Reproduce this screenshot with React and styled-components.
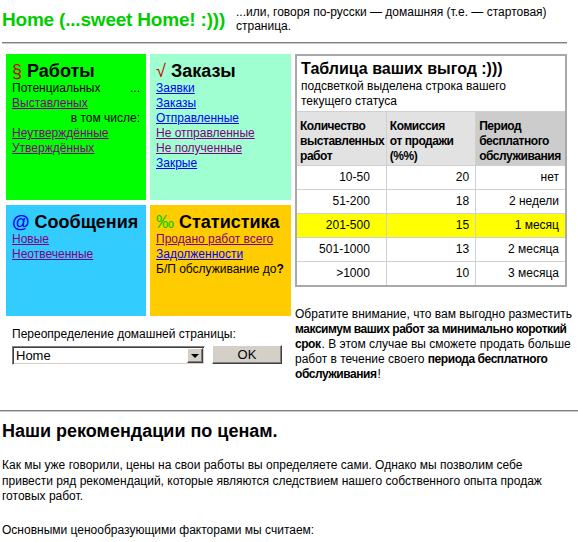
import React from 'react';
import styled, { createGlobalStyle } from 'styled-components';

const GlobalStyle = createGlobalStyle`
  html, body {
    margin: 0;
    padding: 0;
    background: #fff;
  }
  body {
    font-family: "Liberation Sans", Arial, sans-serif;
    font-size: 12px;
    color: #000;
  }
`;

const Page = styled.div`
  width: 578px;
`;

const Header = styled.div`
  display: flex;
  width: 565px;
  margin-left: 2px;
  padding-top: 5px;
`;

const SiteTitle = styled.h1`
  margin: 4px 0 0;
  width: 234px;
  font-size: 19px;
  line-height: 22px;
  font-weight: bold;
  letter-spacing: -0.2px;
  color: #00cc00;
`;

const Tagline = styled.div`
  flex: 1;
  font-size: 12px;
  line-height: 14px;
`;

const Rule = styled.hr`
  box-sizing: border-box;
  height: 0;
  border: 0;
  border-top: 1px solid #808080;
  border-bottom: 1px solid #c8c8c8;
  margin: ${p => p.$margin};
  width: ${p => p.$width};
`;

const Main = styled.div`
  display: flex;
  align-items: flex-start;
  gap: 4px;
  padding-left: 6px;
`;

const LeftCol = styled.div`
  width: 285px;
`;

const Tiles = styled.div`
  display: grid;
  grid-template-columns: 140px 141px;
  grid-template-rows: 146px 111px;
  gap: 5px 4px;
`;

const Tile = styled.div`
  box-sizing: border-box;
  padding: 7px 6px;
  background: ${p => p.$bg};
`;

const TileTitle = styled.div`
  font-size: 18px;
  line-height: 20px;
  font-weight: bold;
  white-space: nowrap;
`;

const Sign = styled.span`
  color: ${p => p.$color};
  font-weight: ${p => (p.$bold ? 'bold' : 'normal')};
`;

const Line = styled.div`
  display: ${p => (p.$split ? 'flex' : 'block')};
  justify-content: space-between;
  text-align: ${p => (p.$right ? 'right' : 'left')};
  line-height: 15px;
  font-size: 12px;
  white-space: nowrap;
`;

const Link = styled.a`
  color: ${p => (p.$visited ? '#800080' : '#0000ff')};
  text-decoration: underline;
`;

const Strong = styled.b`
  font-weight: bold;
  letter-spacing: -0.45px;
  padding-right: 1px;
`;

const HomeForm = styled.form`
  margin: 11px 0 0;
  padding-left: 6px;
`;

const FormLabel = styled.div`
  line-height: 15px;
  font-size: 12px;
`;

const Controls = styled.div`
  display: flex;
  align-items: flex-start;
  gap: 7px;
  margin-top: 3px;
`;

const SelectWrap = styled.div`
  position: relative;
  box-sizing: border-box;
  width: 193px;
  height: 19px;
  margin-top: 1px;
  border-top: 1px solid #808080;
  border-left: 1px solid #808080;
  border-right: 1px solid #fff;
  border-bottom: 1px solid #fff;
  box-shadow: inset 1px 1px 0 #404040, inset -1px -1px 0 #d4d0c8;
  background: #fff;
`;

const Select = styled.select`
  appearance: none;
  -webkit-appearance: none;
  box-sizing: border-box;
  width: 100%;
  height: 100%;
  border: 0;
  outline: 0;
  background: transparent;
  padding: 0 0 0 3px;
  font-family: "Liberation Sans", Arial, sans-serif;
  font-size: 13px;
  color: #000;
`;

const DropButton = styled.span`
  position: absolute;
  top: 1px;
  right: 1px;
  box-sizing: border-box;
  width: 16px;
  height: 15px;
  display: flex;
  align-items: center;
  justify-content: center;
  background: #d4d0c8;
  border-top: 1px solid #fff;
  border-left: 1px solid #fff;
  border-right: 1px solid #404040;
  border-bottom: 1px solid #404040;
  box-shadow: inset -1px -1px 0 #808080;
  pointer-events: none;
`;

const Arrow = styled.span`
  width: 0;
  height: 0;
  border-left: 4px solid transparent;
  border-right: 4px solid transparent;
  border-top: 4px solid #000;
`;

const OkButton = styled.button`
  box-sizing: border-box;
  width: 70px;
  height: 19px;
  padding: 0;
  background: #d4d0c8;
  border-top: 1px solid #fff;
  border-left: 1px solid #fff;
  border-right: 1px solid #404040;
  border-bottom: 1px solid #404040;
  box-shadow: inset -1px -1px 0 #808080;
  font-family: "Liberation Sans", Arial, sans-serif;
  font-size: 13px;
  color: #000;
`;

const RightCol = styled.div`
  width: 281px;
`;

const TableFrame = styled.div`
  box-sizing: border-box;
  width: 272px;
  border: 2px solid #a8a8a8;
`;

const Table = styled.table`
  width: 100%;
  border-collapse: collapse;
  table-layout: fixed;
`;

const TitleCell = styled.td`
  padding: 3px 4px 2px;
  border-bottom: 1px solid #d0d0d0;
  background: #fff;
`;

const TableTitle = styled.div`
  font-size: 16px;
  line-height: 20px;
  font-weight: bold;
`;

const TableSub = styled.div`
  width: 215px;
  font-size: 12px;
  line-height: 15px;
`;

const HeadCell = styled.th`
  width: ${p => p.$w}px;
  padding: 7px 2px 1px 3px;
  vertical-align: top;
  text-align: left;
  font-size: 12px;
  line-height: 15px;
  font-weight: bold;
  letter-spacing: -0.45px;
  white-space: nowrap;
  background: ${p => (p.$dark ? '#cccccc' : '#e2e2e2')};
  border: 1px solid #d0d0d0;
  border-top: 0;
  &:first-child { border-left: 0; }
  &:last-child { border-right: 0; }
`;

const Row = styled.tr`
  background: ${p => (p.$current ? '#ffff00' : '#fff')};
`;

const Cell = styled.td`
  padding: 4px ${p => (p.$wide ? 16 : 6)}px 4px 4px;
  text-align: right;
  font-size: 12px;
  line-height: 15px;
  border: 1px solid #d0d0d0;
  &:first-child { border-left: 0; }
  &:last-child { border-right: 0; }
  tr:last-child > & { border-bottom: 0; }
`;

const Note = styled.p`
  margin: 20px 0 0;
  font-size: 12px;
  line-height: 15px;
`;

const SectionTitle = styled.h2`
  margin: 8px 0 0 2px;
  font-size: 18px;
  line-height: 22px;
  font-weight: bold;
`;

const Para = styled.p`
  margin: ${p => p.$top}px 0 0 2px;
  width: 545px;
  font-size: 12px;
  line-height: 15.5px;
`;

const rates = [
  { count: '10-50', fee: '20', period: 'нет' },
  { count: '51-200', fee: '18', period: '2 недели' },
  { count: '201-500', fee: '15', period: '1 месяц', current: true },
  { count: '501-1000', fee: '13', period: '2 месяца' },
  { count: '>1000', fee: '10', period: '3 месяца' },
];

const App = () => {
  return (
    <Page>
      <GlobalStyle />
      <Header>
        <SiteTitle>Home (...sweet Home! :)))</SiteTitle>
        <Tagline>...или, говоря по-русски — домашняя (т.е. — стартовая) страница.</Tagline>
      </Header>
      <Rule $margin="9px 0 10px 2px" $width="565px" />

      <Main>
        <LeftCol>
          <Tiles>
            <Tile $bg="#00ff00">
              <TileTitle>
                <Sign $color="#cc0000">§</Sign> Работы
              </TileTitle>
              <Line $split>
                <span>Потенциальных</span>
                <span>...</span>
              </Line>
              <Line><Link href="#" $visited>Выставленых</Link></Line>
              <Line $right>в том числе:</Line>
              <Line><Link href="#" $visited>Неутверждённые</Link></Line>
              <Line><Link href="#" $visited>Утверждённых</Link></Line>
            </Tile>
            <Tile $bg="#a0ffd0">
              <TileTitle>
                <Sign $color="#cc0000">√</Sign> Заказы
              </TileTitle>
              <Line><Link href="#">Заявки</Link></Line>
              <Line><Link href="#">Заказы</Link></Line>
              <Line><Link href="#">Отправленные</Link></Line>
              <Line><Link href="#" $visited>Не отправленные</Link></Line>
              <Line><Link href="#" $visited>Не полученные</Link></Line>
              <Line><Link href="#">Закрые</Link></Line>
            </Tile>
            <Tile $bg="#33ccff">
              <TileTitle>
                <Sign $color="#0000ff" $bold>@</Sign> Сообщения
              </TileTitle>
              <Line><Link href="#" $visited>Новые</Link></Line>
              <Line><Link href="#" $visited>Неотвеченные</Link></Line>
            </Tile>
            <Tile $bg="#ffcc00">
              <TileTitle>
                <Sign $color="#00cc00">‰</Sign> Статистика
              </TileTitle>
              <Line><Link href="#" $visited>Продано работ всего</Link></Line>
              <Line><Link href="#">Задолженности</Link></Line>
              <Line>Б/П обслуживание до<b>?</b></Line>
            </Tile>
          </Tiles>

          <HomeForm onSubmit={e => e.preventDefault()}>
            <FormLabel>Переопределение домашней страницы:</FormLabel>
            <Controls>
              <SelectWrap>
                <Select defaultValue="home">
                  <option value="home">Home</option>
                </Select>
                <DropButton><Arrow /></DropButton>
              </SelectWrap>
              <OkButton type="submit">OK</OkButton>
            </Controls>
          </HomeForm>
        </LeftCol>

        <RightCol>
          <TableFrame>
            <Table>
              <tbody>
                <tr>
                  <TitleCell colSpan={3}>
                    <TableTitle>Таблица ваших выгод :)))</TableTitle>
                    <TableSub>подсветкой выделена строка вашего текущего статуса</TableSub>
                  </TitleCell>
                </tr>
                <tr>
                  <HeadCell $w={97}>Количество<br />выставленных<br />работ</HeadCell>
                  <HeadCell $w={77}>Комиссия<br />от продажи<br />(%%)</HeadCell>
                  <HeadCell $w={94} $dark>Период<br />бесплатного<br />обслуживания</HeadCell>
                </tr>
                {rates.map(r => (
                  <Row key={r.count} $current={r.current}>
                    <Cell $wide>{r.count}</Cell>
                    <Cell>{r.fee}</Cell>
                    <Cell>{r.period}</Cell>
                  </Row>
                ))}
              </tbody>
            </Table>
          </TableFrame>
          <Note>
            Обратите внимание, что вам выгодно разместить{' '}
            <Strong>максимум ваших работ за минимально короткий срок</Strong>. В этом случае вы
            сможете продать больше работ в течение своего{' '}
            <Strong>периода бесплатного обслуживания</Strong>!
          </Note>
        </RightCol>
      </Main>

      <Rule $margin="28px 0 0 0" $width="578px" />
      <SectionTitle>Наши рекомендации по ценам.</SectionTitle>
      <Para $top={16}>
        Как мы уже говорили, цены на свои работы вы определяете сами. Однако мы позволим себе
        привести ряд рекомендаций, которые являются следствием нашего собственного опыта продаж
        готовых работ.
      </Para>
      <Para $top={18}>Основными ценообразующими факторами мы считаем:</Para>
    </Page>
  );
};

export default App;
